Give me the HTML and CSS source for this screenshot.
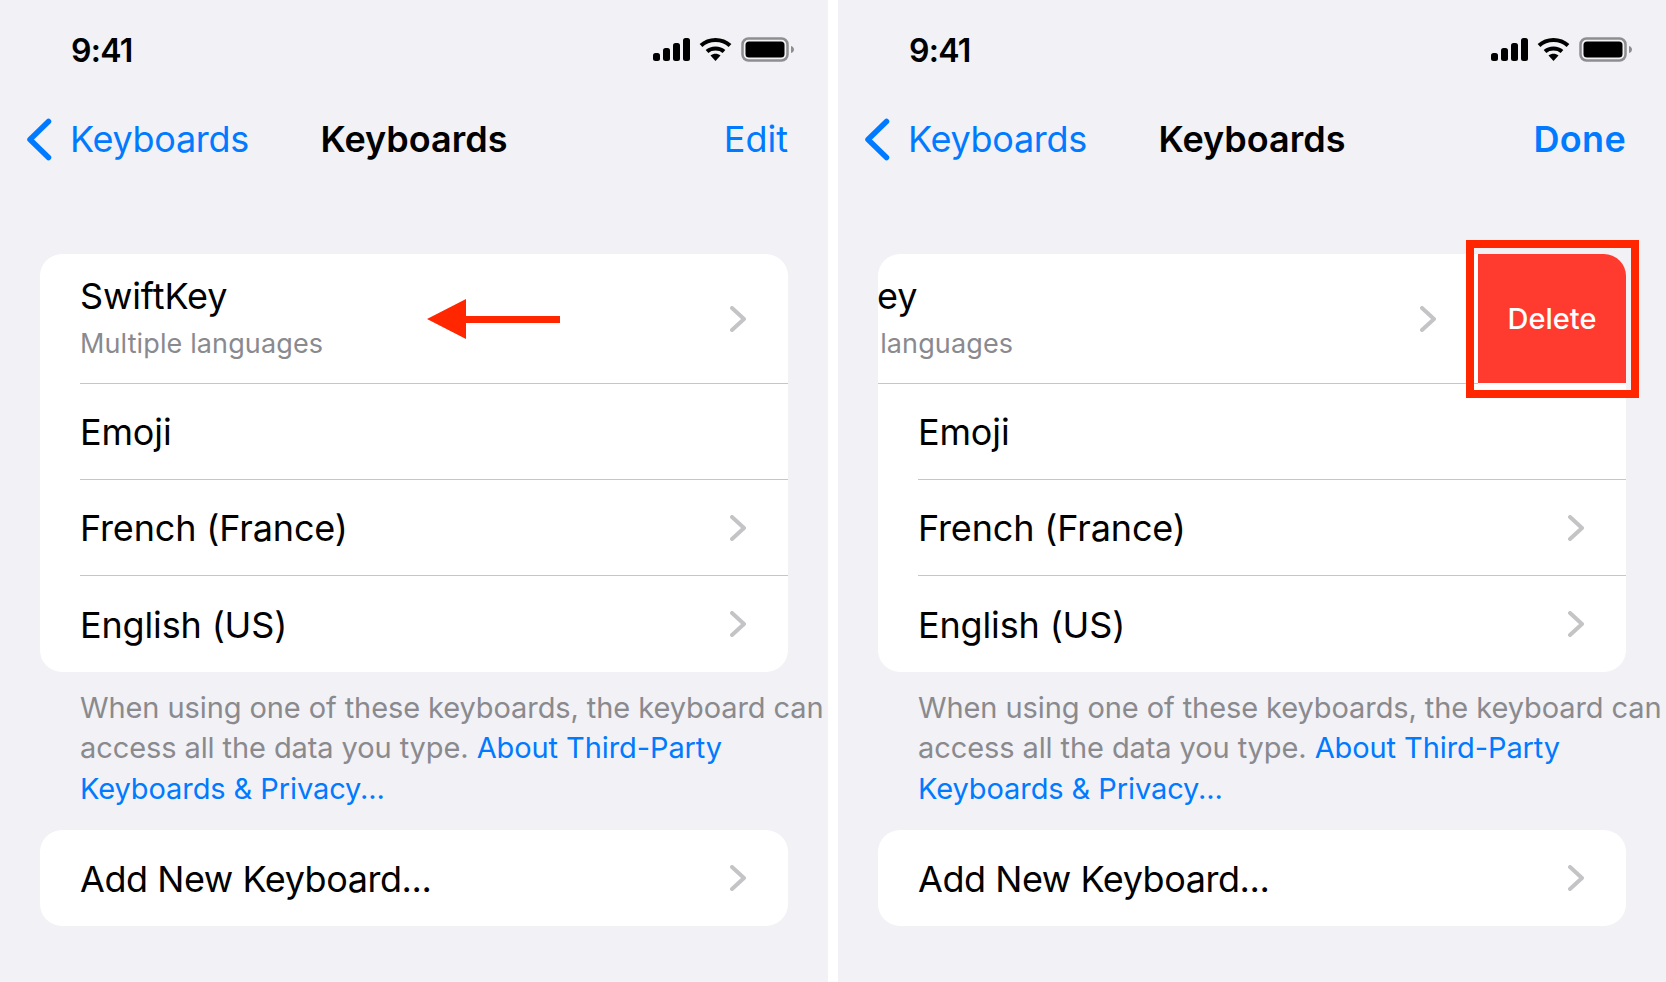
FILE: index.html
```html
<!DOCTYPE html>
<html lang="en">
<head>
    <meta charset="UTF-8">
    <meta name="viewport" content="width=device-width, initial-scale=1.0">
    <title>Keyboards</title>
    <link rel="stylesheet" href="styles.css">
</head>
<body>
    <div class="screens">
        <section class="phone">
            <div class="status-bar">
                <span class="clock">9:41</span>
                <div class="status-icons">
                    <svg class="icon-signal" viewBox="0 0 38 23"><rect x="0" y="15" width="7" height="8" rx="2.5"/><rect x="10" y="10" width="7" height="13" rx="2.5"/><rect x="20" y="5" width="7" height="18" rx="2.5"/><rect x="30" y="0" width="7" height="23" rx="2.5"/></svg>
                    <svg class="icon-wifi" viewBox="0 0 33 24"><path class="wifi-arc" d="M2 8.5C10 1 23 1 31 8.5"/><path class="wifi-arc" d="M8 14.5C12.500 10.500 20.500 10.500 25 14.500"/><path d="M11.500 18.500C14.500 16 18.500 16 21.500 18.500L16.500 24Z"/></svg>
                    <svg class="icon-battery" viewBox="0 0 53 25"><rect class="battery-shell" x="1.500" y="1.500" width="45" height="22" rx="6"/><rect x="4.500" y="4.500" width="39" height="16" rx="3.500"/><path class="battery-nub" d="M50 9C52 9.500 53 11 53 12.500C53 14 52 15.500 50 16Z"/></svg>
                </div>
            </div>
            <nav class="nav-bar">
                <a class="nav-back">
                    <svg class="icon-back" viewBox="0 0 26 43"><path d="M22.500 3.500L4 21.500L22.500 39.500"/></svg>
                    Keyboards
                </a>
                <h1 class="nav-title">Keyboards</h1>
                <a class="nav-action">Edit</a>
            </nav>
            <div class="group">
                <div class="row">
                    <div class="row-body row-body-tall">
                        <div class="row-text">
                            <div class="row-title">SwiftKey</div>
                            <div class="row-subtitle">Multiple languages</div>
                        </div>
                        <svg class="chevron" viewBox="0 0 16 26"><path d="M2 2L14 13L2 24"/></svg>
                    </div>
                </div>
                <div class="row">
                    <div class="row-body"><div class="row-title">Emoji</div></div>
                </div>
                <div class="row">
                    <div class="row-body">
                        <div class="row-title">French (France)</div>
                        <svg class="chevron" viewBox="0 0 16 26"><path d="M2 2L14 13L2 24"/></svg>
                    </div>
                </div>
                <div class="row">
                    <div class="row-body">
                        <div class="row-title">English (US)</div>
                        <svg class="chevron" viewBox="0 0 16 26"><path d="M2 2L14 13L2 24"/></svg>
                    </div>
                </div>
            </div>
            <p class="footnote">When using one of these keyboards, the keyboard can access all the data you type. <a>About Third-Party Keyboards &amp; Privacy...</a></p>
            <div class="group">
                <div class="row">
                    <div class="row-body">
                        <div class="row-title row-title-add">Add New Keyboard...</div>
                        <svg class="chevron" viewBox="0 0 16 26"><path d="M2 2L14 13L2 24"/></svg>
                    </div>
                </div>
            </div>
            <svg class="swipe-arrow" viewBox="0 0 134 40"><path d="M0 20L39 0V17H133V24H39V40Z"/></svg>
        </section>

        <section class="phone">
            <div class="status-bar">
                <span class="clock">9:41</span>
                <div class="status-icons">
                    <svg class="icon-signal" viewBox="0 0 38 23"><rect x="0" y="15" width="7" height="8" rx="2.5"/><rect x="10" y="10" width="7" height="13" rx="2.5"/><rect x="20" y="5" width="7" height="18" rx="2.5"/><rect x="30" y="0" width="7" height="23" rx="2.5"/></svg>
                    <svg class="icon-wifi" viewBox="0 0 33 24"><path class="wifi-arc" d="M2 8.5C10 1 23 1 31 8.5"/><path class="wifi-arc" d="M8 14.5C12.500 10.500 20.500 10.500 25 14.500"/><path d="M11.500 18.500C14.500 16 18.500 16 21.500 18.500L16.500 24Z"/></svg>
                    <svg class="icon-battery" viewBox="0 0 53 25"><rect class="battery-shell" x="1.500" y="1.500" width="45" height="22" rx="6"/><rect x="4.500" y="4.500" width="39" height="16" rx="3.500"/><path class="battery-nub" d="M50 9C52 9.500 53 11 53 12.500C53 14 52 15.500 50 16Z"/></svg>
                </div>
            </div>
            <nav class="nav-bar">
                <a class="nav-back">
                    <svg class="icon-back" viewBox="0 0 26 43"><path d="M22.500 3.500L4 21.500L22.500 39.500"/></svg>
                    Keyboards
                </a>
                <h1 class="nav-title">Keyboards</h1>
                <a class="nav-action nav-action-done">Done</a>
            </nav>
            <div class="group">
                <div class="row">
                    <div class="row-body row-body-tall row-body-swiped">
                        <div class="row-text">
                            <div class="row-title">SwiftKey</div>
                            <div class="row-subtitle">Multiple languages</div>
                        </div>
                        <svg class="chevron" viewBox="0 0 16 26"><path d="M2 2L14 13L2 24"/></svg>
                    </div>
                    <button type="button" class="delete-button">Delete</button>
                </div>
                <div class="row">
                    <div class="row-body"><div class="row-title">Emoji</div></div>
                </div>
                <div class="row">
                    <div class="row-body">
                        <div class="row-title">French (France)</div>
                        <svg class="chevron" viewBox="0 0 16 26"><path d="M2 2L14 13L2 24"/></svg>
                    </div>
                </div>
                <div class="row">
                    <div class="row-body">
                        <div class="row-title">English (US)</div>
                        <svg class="chevron" viewBox="0 0 16 26"><path d="M2 2L14 13L2 24"/></svg>
                    </div>
                </div>
            </div>
            <p class="footnote">When using one of these keyboards, the keyboard can access all the data you type. <a>About Third-Party Keyboards &amp; Privacy...</a></p>
            <div class="group">
                <div class="row">
                    <div class="row-body">
                        <div class="row-title row-title-add">Add New Keyboard...</div>
                        <svg class="chevron" viewBox="0 0 16 26"><path d="M2 2L14 13L2 24"/></svg>
                    </div>
                </div>
            </div>
            <div class="delete-highlight"></div>
        </section>
    </div>
</body>
</html>
```

FILE: styles.css
```css
body {
    margin: 0;
    background-color: #ffffff;
    font-family: Inter, "Liberation Sans", sans-serif;
    color: #000000;
}

.screens {
    display: flex;
    justify-content: space-between;
    height: 982px;
    overflow: hidden;
}

.phone {
    position: relative;
    width: 828px;
    height: 982px;
    overflow: hidden;
    background-color: #f1f1f6;
}

.status-bar {
    display: flex;
    justify-content: space-between;
    align-items: center;
    height: 100px;
    padding: 0 34px 0 71px;
}

.clock {
    font-size: 32px;
    font-weight: 600;
    letter-spacing: -0.7px;
}

.status-icons {
    display: flex;
    align-items: center;
    gap: 9px;
    margin-bottom: 2px;
}

.icon-signal {
    width: 38px;
    height: 23px;
    margin-right: -1px;
}

.icon-wifi {
    width: 33px;
    height: 24px;
}

.icon-battery {
    width: 53px;
    height: 25px;
}

.wifi-arc {
    fill: none;
    stroke: #000000;
    stroke-width: 4px;
}

.battery-shell {
    fill: none;
    stroke: #8e8e90;
    stroke-width: 2.5px;
}

.battery-nub {
    fill: #8e8e90;
}

.nav-bar {
    display: grid;
    grid-template-columns: 1fr auto 1fr;
    align-items: center;
    height: 78px;
    padding: 0 26px;
    font-size: 36px;
}

.nav-back {
    display: flex;
    align-items: center;
    gap: 18px;
    color: #007aff;
    letter-spacing: -0.3px;
}

.icon-back {
    width: 26px;
    height: 43px;
    fill: none;
    stroke: #007aff;
    stroke-width: 5.5px;
    stroke-linecap: round;
    stroke-linejoin: round;
}

.nav-title {
    margin: 0;
    font-size: 36px;
    font-weight: 600;
}

.nav-action {
    justify-self: end;
    margin-right: 14px;
    color: #007aff;
}

.nav-action-done {
    font-weight: 600;
    letter-spacing: 0.3px;
}

.group {
    margin: 0 40px;
    background-color: #ffffff;
    border-radius: 22px;
    overflow: hidden;
}

.nav-bar + .group {
    margin-top: 76px;
}

.row {
    display: flex;
    padding-left: 40px;
}

.row-body {
    flex: 1;
    min-width: 0;
    display: flex;
    align-items: center;
    justify-content: space-between;
    height: 95px;
    padding-right: 42px;
    border-bottom: 1px solid #c6c6c8;
}

.row-body-tall {
    height: 129px;
}

.row-body-swiped {
    flex: 0 0 auto;
    width: 666px;
    margin-left: -148px;
}

.row:last-child .row-body {
    border-bottom: none;
    height: 96px;
}

.row-text {
    margin-bottom: 5px;
}

.row-title {
    padding-top: 1px;
    font-size: 36px;
    letter-spacing: -0.15px;
    white-space: nowrap;
}

.row-title-add {
    letter-spacing: -0.45px;
}

.row-subtitle {
    margin-top: 9px;
    font-size: 27px;
    letter-spacing: 0.12px;
    color: #8a8a8e;
    white-space: nowrap;
}

.chevron {
    flex: none;
    width: 16px;
    height: 26px;
    fill: none;
    stroke: #c4c4c7;
    stroke-width: 4px;
    stroke-linecap: round;
    stroke-linejoin: round;
}

.delete-button {
    flex: 0 0 148px;
    height: 129px;
    margin-left: auto;
    padding: 0;
    border: none;
    background-color: #ff3b30;
    color: #ffffff;
    font-family: inherit;
    font-size: 29px;
    font-weight: 500;
}

.footnote {
    margin: 16px 0 21px 80px;
    width: 748px;
    font-size: 29px;
    line-height: 40.4px;
    letter-spacing: -0.09px;
    color: #8a8a8e;
}

.footnote a {
    color: #007aff;
}

.swipe-arrow {
    position: absolute;
    left: 427px;
    top: 299px;
    width: 134px;
    height: 40px;
    fill: #ff2600;
}

.delete-highlight {
    position: absolute;
    left: 628px;
    top: 240px;
    width: 157px;
    height: 142px;
    border: 8px solid #ff2600;
}
```
